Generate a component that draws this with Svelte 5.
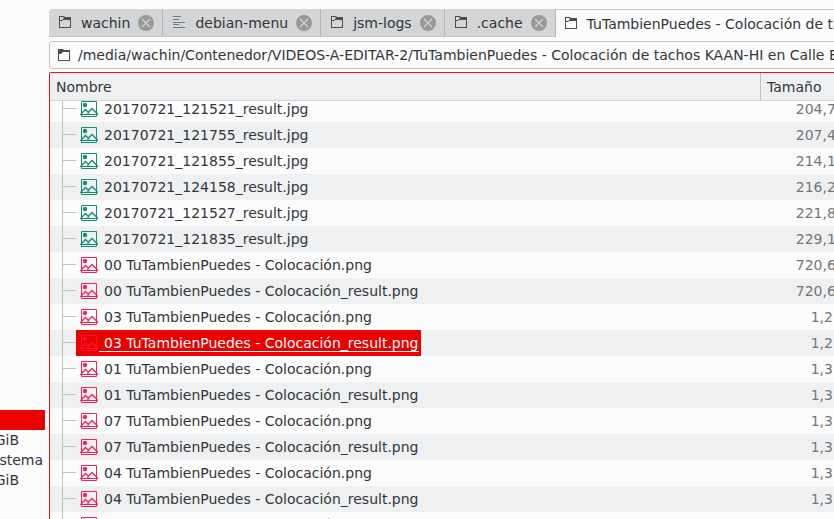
<script>
  const tabs = [
    { title: 'wachin', icon: 'folder' },
    { title: 'debian-menu', icon: 'text' },
    { title: 'jsm-logs', icon: 'folder' },
    { title: '.cache', icon: 'folder' },
    { title: 'TuTambienPuedes - Colocación de tachos', icon: 'folder', active: true }
  ];

  const path = '/media/wachin/Contenedor/VIDEOS-A-EDITAR-2/TuTambienPuedes - Colocación de tachos KAAN-HI en Calle B';

  const devices = [
    { label: '', selected: true },
    { label: 'GiB', kind: 'size' },
    { label: 'sistema', kind: 'name' },
    { label: 'GiB', kind: 'size' }
  ];

  const files = [
    ['20170721_121521_result.jpg', '204,7 KiB'],
    ['20170721_121755_result.jpg', '207,4 KiB'],
    ['20170721_121855_result.jpg', '214,1 KiB'],
    ['20170721_124158_result.jpg', '216,2 KiB'],
    ['20170721_121527_result.jpg', '221,8 KiB'],
    ['20170721_121835_result.jpg', '229,1 KiB'],
    ['00 TuTambienPuedes - Colocación.png', '720,6 KiB'],
    ['00 TuTambienPuedes - Colocación_result.png', '720,6 KiB'],
    ['03 TuTambienPuedes - Colocación.png', '1,2 MiB'],
    ['03 TuTambienPuedes - Colocación_result.png', '1,2 MiB'],
    ['01 TuTambienPuedes - Colocación.png', '1,3 MiB'],
    ['01 TuTambienPuedes - Colocación_result.png', '1,3 MiB'],
    ['07 TuTambienPuedes - Colocación.png', '1,3 MiB'],
    ['07 TuTambienPuedes - Colocación_result.png', '1,3 MiB'],
    ['04 TuTambienPuedes - Colocación.png', '1,3 MiB'],
    ['04 TuTambienPuedes - Colocación_result.png', '1,3 MiB'],
    ['05 TuTambienPuedes - Colocación.png', '1,3 MiB']
  ];

  let selected = $state(9);
</script>

{#snippet folder()}
  <svg class="icon" viewBox="0 0 16 16" aria-hidden="true">
    <path d="M2 2h5l1 1h6v11H2zM3 7v6h10V5H7L5 7z" fill="#4d4d4d" fill-rule="evenodd" />
  </svg>
{/snippet}

{#snippet outlineFolder()}
  <svg class="icon" viewBox="0 0 16 16" aria-hidden="true">
    <path d="M2 1h5l1 1h6v11H2zM3 2v3h2l2-2-1-1zM3 6v6h10V5H6L5 6z" fill="#4d4d4d" fill-rule="evenodd" />
  </svg>
{/snippet}

<main>
  <aside aria-label="Dispositivos">
    <ul>
      {#each devices as d}
        <li class={d.kind} class:current={d.selected}>{d.label}</li>
      {/each}
    </ul>
  </aside>

  <section>
    <div class="tabs">
      {#each tabs as tab}
        <div class="tab" class:active={tab.active}>
          <button class="label">
            {#if tab.icon === 'folder'}
              {@render outlineFolder()}
            {:else}
              <svg class="icon" viewBox="0 0 16 16" aria-hidden="true">
                <path d="M2 1h8v1H2zM2 4h6v1H2zM2 7h12v1H2zM2 9h6v1H2zM2 12h12v1H2z" fill="#6b7a8c" />
              </svg>
            {/if}
            <span>{tab.title}</span>
          </button>
          <button class="close" aria-label="Cerrar pestaña">
            <svg class="icon" viewBox="0 0 16 16" aria-hidden="true">
              <circle cx="8" cy="8" r="8" fill="#97999b" />
              <path d="M4 4l8 8M12 4l-8 8" stroke="#d3d4d5" stroke-width="1.1" />
            </svg>
          </button>
        </div>
      {/each}
    </div>

    <label class="path">
      {@render folder()}
      <input type="text" value={path} aria-label="Ubicación" />
    </label>

    <div class="listing">
      <table>
        <thead>
          <tr><th class="name">Nombre</th><th class="size">Tamaño</th></tr>
        </thead>
        <tbody>
          {#each files as [name, size], i}
            <tr class:selected={selected === i} onclick={() => (selected = i)}>
              <td class="name">
                <span class="branch"></span>
                <span class="file" class:jpg={name.endsWith('.jpg')}>
                  <svg class="picture" viewBox="0 0 20 18" aria-hidden="true">
                    <g fill="none" stroke="currentColor">
                      <path d="M2.5 14V1.500h15V14M2.5 14v2.5h15V14M1 14.5h18" />
                      <path d="M2 14l4.500-4.500L10.500 13.500M8 13.500l5-5 5.500 5.500" stroke-width="1.4" />
                    </g>
                    <circle cx="6" cy="5" r="2.200" fill="currentColor" />
                  </svg>
                  <span class="filename">{name}</span>
                </span>
              </td>
              <td class="size">{size}</td>
            </tr>
          {/each}
        </tbody>
      </table>
    </div>
  </section>
</main>

<style>
  main {
    display: flex;
    gap: 4px;
    height: 100vh;
    overflow: hidden;
    background: #fcfcfc;
    color: #31363b;
    font: 14px/20px "DejaVu Sans", sans-serif;
    white-space: nowrap;
  }

  button,
  input {
    margin: 0;
    padding: 0;
    border: 0;
    background: none;
    color: inherit;
    font: inherit;
  }

  .icon {
    display: block;
    flex: none;
    width: 16px;
    height: 16px;
  }

  aside {
    flex: none;
    width: 45px;
    padding-top: 410px;
    overflow: hidden;
  }

  ul {
    margin: 0;
    padding: 0;
    list-style: none;
  }

  li {
    display: flex;
    justify-content: flex-end;
    height: 20px;
    padding-right: 2px;
  }

  li.size {
    padding-right: 26px;
  }

  li.current {
    background: #eb0000;
  }

  section {
    display: flex;
    flex: 1;
    flex-direction: column;
    min-width: 0;
    margin-right: -32px;
    padding-top: 9px;
  }

  .tabs {
    display: flex;
    flex: none;
    height: 28px;
    overflow: hidden;
    border-top-left-radius: 3px;
  }

  .tab {
    box-sizing: border-box;
    display: flex;
    flex: none;
    align-items: center;
    gap: 8px;
    padding: 0 8px;
    border-right: 1px solid #b4b6b8;
    border-bottom: 1px solid #c0c2c4;
    background: #d3d5d7;
  }

  .tab.active {
    padding-left: 7px;
    border-top: 1px solid #c0c2c4;
    border-bottom: 0;
    background: #fcfcfc;
  }

  .label {
    display: flex;
    align-items: center;
    gap: 8px;
  }

  .path {
    display: flex;
    flex: none;
    align-items: center;
    gap: 6px;
    height: 26px;
    margin-top: 4px;
    padding-left: 6px;
    border: 1px solid #c0c2c4;
    border-radius: 3px;
  }

  .path input {
    flex: 1;
    min-width: 0;
    outline: 0;
  }

  .listing {
    flex: 1;
    min-height: 0;
    margin-top: 3px;
    overflow: hidden;
    border: 1px solid #e3171b;
    border-bottom: 0;
    border-top-left-radius: 2px;
  }

  table,
  thead,
  tbody {
    display: block;
  }

  tr {
    display: flex;
  }

  th,
  td {
    box-sizing: border-box;
    padding: 0;
    font-weight: normal;
    text-align: left;
  }

  .name {
    flex: 1;
  }

  td.size,
  th.size {
    flex: none;
    width: 105px;
  }

  thead {
    position: relative;
    z-index: 1;
    border-bottom: 1px solid #d3d5d7;
    background: #eff0f1;
  }

  th {
    height: 27px;
    padding-left: 6px;
    line-height: 28px;
  }

  th.size {
    border-left: 1px solid #c0c2c4;
  }

  tbody {
    margin-top: -5px;
  }

  tbody tr {
    height: 26px;
    line-height: 26px;
  }

  tbody tr:nth-child(even) {
    background: #eff0f1;
  }

  td.name {
    display: flex;
    padding-left: 12px;
  }

  td.size {
    padding-right: 2px;
    color: #747678;
    text-align: right;
  }

  .branch {
    box-sizing: border-box;
    width: 14px;
    border-left: 1px solid #c0c2c4;
    background: linear-gradient(#c0c2c4, #c0c2c4) 0 12px / 13px 1px no-repeat;
  }

  .file {
    display: flex;
    align-items: center;
    padding: 0 2px 0 3px;
    color: #f62459;
  }

  .file.jpg {
    color: #11926c;
  }

  .picture {
    width: 20px;
    height: 18px;
  }

  .filename {
    padding-left: 5px;
    color: #31363b;
  }

  .selected .file {
    background: #eb0000;
    color: #f62459;
  }

  .selected .filename {
    background: linear-gradient(#fcfcfc, #fcfcfc) 0 21px / 100% 1px no-repeat;
    color: #fcfcfc;
  }

  .selected .picture {
    opacity: 0.6;
  }
</style>
